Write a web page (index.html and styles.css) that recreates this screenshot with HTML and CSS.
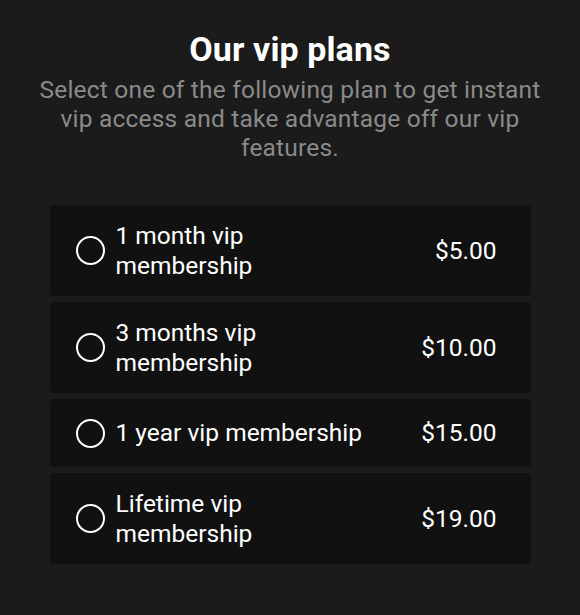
FILE: index.html
```html
<!DOCTYPE html>
<html>
<head>
<meta charset="utf-8">
<link rel="stylesheet" href="styles.css">
</head>
<body>
<div class="page">
  <h1 class="title">Our vip plans</h1>
  <p class="subtitle">Select one of the following plan to get instant vip access and take advantage off our vip features.</p>
  <div class="plans">
    <div class="plan"><span class="radio"></span><span class="label">1 month vip membership</span><span class="price">$5.00</span></div>
    <div class="plan"><span class="radio"></span><span class="label">3 months vip membership</span><span class="price">$10.00</span></div>
    <div class="plan"><span class="radio"></span><span class="label">1 year vip membership</span><span class="price">$15.00</span></div>
    <div class="plan"><span class="radio"></span><span class="label">Lifetime vip membership</span><span class="price">$19.00</span></div>
  </div>
</div>
</body>
</html>
```
FILE: styles.css
```css
html, body {
  margin: 0;
  padding: 0;
  background: #1b1b1b;
}
body {
  font-family: Roboto, "Liberation Sans", sans-serif;
  width: 580px;
  height: 615px;
}
.page {
  display: flex;
  flex-direction: column;
  align-items: center;
  padding-top: 29px;
}
.title {
  margin: 0;
  font-size: 34px;
  font-weight: 700;
  letter-spacing: 0.1px;
  color: #ffffff;
  line-height: 40px;
}
.subtitle {
  margin: 6px 0 0;
  width: 510px;
  text-align: center;
  font-size: 24.5px;
  letter-spacing: 0.2px;
  line-height: 29px;
  color: #8a8a8a;
}
.plans {
  margin-top: 43px;
  width: 481px;
  display: flex;
  flex-direction: column;
  gap: 6px;
}
.plan {
  box-sizing: border-box;
  min-height: 68px;
  background: #111111;
  border-radius: 4px;
  display: flex;
  align-items: center;
  padding: 16px 34px 16px 26px;
  color: #ffffff;
  font-size: 24.5px;
  line-height: 29.5px;
}
.radio {
  box-sizing: border-box;
  width: 29px;
  height: 29px;
  border: 2.5px solid #ffffff;
  border-radius: 50%;
  flex: none;
  margin-right: 11px;
}
.label {
  width: 256px;
}
.price {
  margin-left: auto;
}
```
